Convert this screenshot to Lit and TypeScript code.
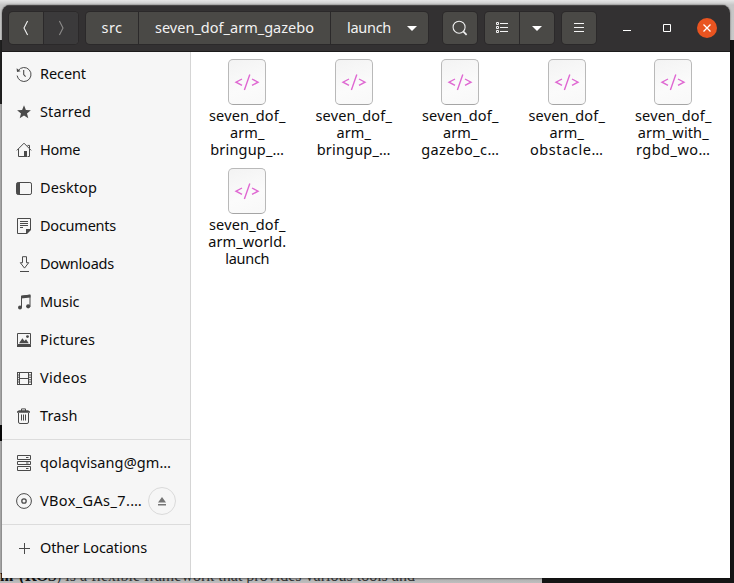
import { LitElement, html, css, svg } from "lit";
import { customElement, property } from "lit/decorators.js";

// Text label that spreads its letters to occupy a given width.
@customElement("fit-label")
class FitLabel extends LitElement {
  @property() text = "";
  @property({ type: Number }) w = 0;
  static styles = css`
    :host { display: block; white-space: pre; flex: none; }
    span { display: inline-block; }
  `;
  render() {
    return html`<span>${this.text}</span>`;
  }
  updated() {
    const s = this.renderRoot.querySelector("span") as HTMLElement;
    s.style.letterSpacing = "0px";
    const diff = this.w - s.getBoundingClientRect().width;
    const step = diff / this.text.length;
    s.style.letterSpacing = step.toFixed(3) + "px";
  }
}

const icons: Record<string, unknown> = {
  recent: svg`<path d="M2.2 4.6A7 7 0 1 1 1.1 9.6" fill="none" stroke="#4a4a4a"/><path d="M.6 2.2 1 6l3.6-.8z" fill="#4a4a4a"/><path d="M7.7 4v4.6l1.9 2" fill="none" stroke="#4a4a4a" stroke-width="1.1"/>`,
  star: svg`<path d="M8 1.3 9.9 6l5 .3-3.9 3.1 1.3 4.9L8 11.6l-4.3 2.7L5 9.4 1.1 6.3l5-.3z" fill="#4a4a4a"/>`,
  home: svg`<path d="M.8 8.4 8 1.2l7.2 7.2M2.5 7v7.5h7M13.5 7v7.5h-2M13.5 6.5V3.4h-2" fill="none" stroke="#4a4a4a"/><path d="M8 9h3v6H8z" fill="#4a4a4a"/>`,
  desktop: svg`<rect x=".5" y="2.5" width="15" height="12" rx="1.6" fill="none" stroke="#4a4a4a"/><path d="M1 3h3v11H1z" fill="#4a4a4a"/>`,
  documents: svg`<path d="M1.5.5h13v10.7l-4 4.3h-9z" fill="none" stroke="#4a4a4a"/><path d="M10 11h5v1l-4 4h-1z" fill="#4a4a4a"/><path d="M4 3.5h8M4 5.5h8M4 7.5h8M4 9.5h3" stroke="#4a4a4a"/>`,
  downloads: svg`<path d="M6.5.7h4v6h2.2l-4.2 5.4-4.2-5.4h2.2zM4 15.5h9" fill="none" stroke="#4a4a4a"/>`,
  music: svg`<path d="M5.5 13.5V2.2l8.5-1v11.3" fill="none" stroke="#4a4a4a"/><path d="M5 1.7 14.5.6v3L5 4.6z" fill="#4a4a4a"/><circle cx="4" cy="13.4" r="2" fill="#4a4a4a"/><circle cx="12.2" cy="12.3" r="2.1" fill="#4a4a4a"/>`,
  pictures: svg`<path d="M1.5 1.5h13v11h-13z" fill="none" stroke="#4a4a4a"/><path d="M1 12.5h14V15H1zM3 11.3l3.4-5 2 2.6L10 7.2l2.8 4.1z" fill="#4a4a4a"/><circle cx="11.5" cy="4.6" r="1.4" fill="#4a4a4a"/>`,
  videos: svg`<path d="M1.5 2v13M3.5 2v13M12.5 2v13M15.5 2v13M3 2.5h10M3 8.5h10M3 14.5h10" stroke="#4a4a4a"/><path d="M2.5 2v13M14 2v13" stroke="#4a4a4a" stroke-width="2" stroke-dasharray="1 1.4"/>`,
  trash: svg`<path d="M5.5 3V.9h4V3" fill="none" stroke="#4a4a4a"/><path d="M1 4.8V3.6l2-1.3h9l2 1.3v1.2z" fill="#4a4a4a"/><path d="M2.5 5v9q0 1.5 1.5 1.5h7q1.5 0 1.5-1.5V5M5.5 6.5v6M7.5 6.5v6M9.5 6.5v6" fill="none" stroke="#4a4a4a"/>`,
  server: svg`<path d="M1.5.5h13v4h-13zM1.5 6.5h13v3h-13zM1.5 11.5h13v4h-13zM10 2.5h2.5M10 8h2.5M10 13.5h2.5" fill="none" stroke="#4a4a4a"/>`,
  disc: svg`<circle cx="8" cy="8" r="7.4" fill="none" stroke="#4a4a4a"/><circle cx="8" cy="8" r="2.2" fill="none" stroke="#4a4a4a" stroke-width="1.3"/>`,
  plus: svg`<path d="M3 8.5h11M8.5 3v11" stroke="#4a4a4a"/>`,
  eject: svg`<path d="M4 9.5 8 4l4 5.5zM4 11h8v1.6H4z" fill="#757575"/>`,
  back: svg`<path d="M9.6 1 6 8l3.6 7" fill="none" stroke="#f0f0f0" stroke-width="1.1"/>`,
  forward: svg`<path d="M6.4 1 10 8l-3.6 7" fill="none" stroke="#8c8b8a" stroke-width="1.1"/>`,
  search: svg`<circle cx="7.1" cy="7.2" r="6" fill="none" stroke="#eee" stroke-width="1.1"/><path d="m11.2 11.3 3.4 3.5" stroke="#eee" stroke-width="1.7"/>`,
  list: svg`<path d="M2.5 2.5h2v2h-2zM2.5 6.5h2v2h-2zM2.5 10.5h2v2h-2zM6 3.5h8M6 7.5h8M6 11.5h8" fill="none" stroke="#f4f4f4"/>`,
  down: svg`<path d="M3 6h10l-5 5z" fill="#fff"/>`,
  menu: svg`<path d="M3 3.5h10M3 7.5h10M3 11.5h10" stroke="#f4f4f4"/>`,
  min: svg`<path d="M4 10.5h8" stroke="#fff"/>`,
  max: svg`<path d="M4.5 4.5h7v7h-7z" fill="none" stroke="#fff"/>`,
  close: svg`<path d="m4.5 4.5 7 7m0-7-7 7" stroke="#fff" stroke-width="1.3"/>`,
};

const icon = (name: string) =>
  html`<svg class="icon" width="16" height="16" viewBox="0 0 16 16">${icons[name]}</svg>`;

const places: [string, string, number][] = [
  ["recent", "Recent", 46],
  ["star", "Starred", 51],
  ["home", "Home", 40],
  ["desktop", "Desktop", 57],
  ["documents", "Documents", 76],
  ["downloads", "Downloads", 74],
  ["music", "Music", 39.5],
  ["pictures", "Pictures", 55],
  ["videos", "Videos", 47],
  ["trash", "Trash", 37.5],
];

const files: [string, number][][] = [
  [["seven_dof_", 76.5], ["arm_", 34.5], ["bringup_…", 74]],
  [["seven_dof_", 76.5], ["arm_", 34.5], ["bringup_…", 74]],
  [["seven_dof_", 76.5], ["arm_", 34.5], ["gazebo_c…", 78]],
  [["seven_dof_", 76.5], ["arm_", 34.5], ["obstacle…", 73.5]],
  [["seven_dof_", 76.5], ["arm_with_", 71], ["rgbd_wo…", 74.5]],
  [["seven_dof_", 76.5], ["arm_world.", 78], ["launch", 44]],
];

@customElement("app-root")
class AppRoot extends LitElement {
  static styles = css`
    :host {
      display: block;
      position: relative;
      width: 734px;
      height: 583px;
      overflow: hidden;
      font: 14.5px/20px "Noto Sans", sans-serif;
      color: #111;
      background: #151515;
    }
    * { box-sizing: border-box; }
    .icon { display: block; flex: none; }
    .behind { position: absolute; inset: 0; display: flex; flex-direction: column; }
    .top { height: 40px; background: linear-gradient(#e6e6e6, #c6c6c6 5px, #c9c9c9); }
    .mid { flex: 1; display: flex; }
    .edge { width: 2px; display: flex; flex-direction: column; background: #aaa; }
    .e1 { height: 64px; background: #222; }
    .e2 { height: 50px; }
    .e4 { height: 271px; }
    .e5 { height: 16px; background: #080808; }
    .foot { height: 5px; width: 542px; background: linear-gradient(#858585, #b5b5b5 2px, #bebebe); }
    .article {
      position: absolute; left: 0; top: 567px; display: flex; height: 16px; overflow: hidden;
      font: 16px/18px "Liberation Serif", serif; color: #333;
    }
    .strong { font-weight: bold; color: #111; }
    .window {
      position: absolute; left: 2px; top: 5px; width: 728px; height: 573px;
      display: flex; flex-direction: column; border-radius: 8px 8px 0 0; overflow: hidden;
      box-shadow: 0 0 2px rgba(0, 0, 0, 0.6);
    }
    .header {
      height: 47px; flex: none; display: flex; align-items: center; padding: 0 0 1px 7px;
      background: #333132; border-bottom: 1px solid #1c1b1b; box-shadow: inset 0 1px #4a4848;
      color: #f2f2f2;
    }
    .group {
      display: flex; height: 32px; border-radius: 4px; background: #4a4946; overflow: hidden;
      box-shadow: 0 0 0 1px #2b292a; margin-right: 8px;
    }
    .btn { display: flex; align-items: center; justify-content: center; width: 34px; }
    .btn + .btn { border-left: 1px solid #2b292a; width: 35px; }
    .off { background: #3b3a3b; }
    .src { width: 52px; }
    .btn.pkg { width: 192px; }
    .btn.cur { width: 98px; justify-content: flex-start; padding-left: 16px; gap: 13px; }
    .btn fit-label { margin-bottom: 2px; }
    .path { margin-right: 15px; }
    .controls { display: flex; margin-left: 11px; gap: 16px; align-items: center; }
    .ctl { width: 24px; height: 24px; display: flex; align-items: center; justify-content: center; }
    .round { width: 20px; height: 20px; border-radius: 50%; background: #e95420; margin-left: 2px; }
    .body { flex: 1; display: flex; min-height: 0; background: #fff; }
    .side { width: 189px; background: #f6f6f6; border-right: 1px solid #d5d5d5; padding-top: 3px; }
    .place { height: 38px; display: flex; align-items: center; padding-left: 14px; gap: 8px; color: #0c0c0c; }
    .place fit-label { margin-bottom: 2px; }
    .rule { height: 1px; margin: 4px 0; background: #dcdcdc; }
    .eject {
      width: 28px; height: 28px; border-radius: 50%; border: 1px solid #dadada;
      display: flex; align-items: center; justify-content: center; margin-left: -2px;
    }
    .files {
      display: grid; grid-template-columns: repeat(5, 106.5px); grid-auto-rows: 109px;
      padding: 7px 0 0 3px; align-content: start;
    }
    .file { display: flex; flex-direction: column; align-items: center; line-height: 17px; color: #0c0c0c; }
    .doc {
      width: 38px; height: 46px; flex: none; border: 1px solid #b9b9b9; border-bottom-color: #a5a5a5;
      border-radius: 5px; background: linear-gradient(160deg, #f3f3f3, #fbfbfb 60%, #f8f8f8);
      margin-bottom: 2px;
    }
  `;

  place(name: string, text: string, w: number, extra: unknown = "") {
    return html`<div class="place">${icon(name)}<fit-label .text=${text} .w=${w}></fit-label>${extra}</div>`;
  }

  render() {
    return html`
      <div class="behind">
        <div class="top"></div>
        <div class="mid">
          <div class="edge">
            <div class="e1"></div><div class="e2"></div>
            <div class="e4"></div><div class="e5"></div>
          </div>
        </div>
        <div class="foot"></div>
      </div>
      <div class="article">
        <fit-label class="strong" .text=${"m ("} .w=${25}></fit-label>
        <fit-label class="strong" .text=${"ROS"} .w=${31}></fit-label>
        <fit-label .text=${") is a flexible framework that provides various tools and"} .w=${359}></fit-label>
      </div>
      <div class="window">
        <div class="header">
          <div class="group"><div class="btn">${icon("back")}</div><div class="btn off">${icon("forward")}</div></div>
          <div class="group path">
            <div class="btn src"><fit-label .text=${"src"} .w=${21}></fit-label></div>
            <div class="btn pkg"><fit-label .text=${"seven_dof_arm_gazebo"} .w=${159}></fit-label></div>
            <div class="btn cur"><fit-label .text=${"launch"} .w=${44}></fit-label>${icon("down")}</div>
          </div>
          <div class="group"><div class="btn">${icon("search")}</div></div>
          <div class="group"><div class="btn">${icon("list")}</div><div class="btn">${icon("down")}</div></div>
          <div class="group"><div class="btn">${icon("menu")}</div></div>
          <div class="controls">
            <div class="ctl">${icon("min")}</div>
            <div class="ctl">${icon("max")}</div>
            <div class="ctl round">${icon("close")}</div>
          </div>
        </div>
        <div class="body">
          <div class="side">
            ${places.map(([n, t, w]) => this.place(n, t, w))}
            <div class="rule"></div>
            ${this.place("server", "qolaqvisang@gm…", 131)}
            ${this.place("disc", "VBox_GAs_7.…", 102, html`<div class="eject">${icon("eject")}</div>`)}
            <div class="rule"></div>
            ${this.place("plus", "Other Locations", 107)}
          </div>
          <div class="files">
            ${files.map(
              (lines) => html`<div class="file">
                <svg class="doc" viewBox="0 0 36 44">
                  <path d="m13 19-6 3.2 6 3.2M23 19l6 3.2-6 3.2M20.8 14.5l-5.4 15.5" fill="none" stroke="#df68d2" stroke-width="1.4" />
                </svg>
                ${lines.map(([t, w]) => html`<fit-label .text=${t} .w=${w}></fit-label>`)}
              </div>`
            )}
          </div>
        </div>
      </div>
    `;
  }
}
